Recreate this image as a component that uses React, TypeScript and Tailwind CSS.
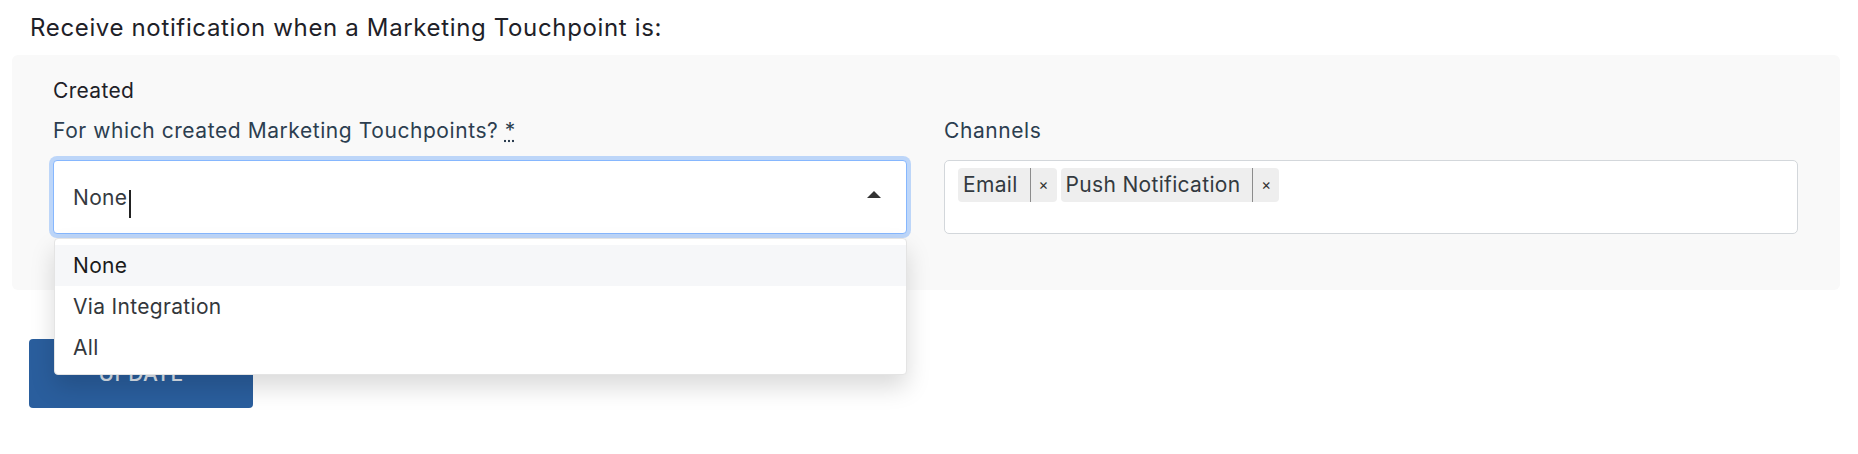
import React from "react";

const OPTIONS = ["None", "Via Integration", "All"];
const CHANNELS = ["Email", "Push Notification"];

function ChannelTag({ label }: { label: string }) {
  return (
    <span className="flex h-[34px] items-stretch rounded-[4px] bg-[#eeeeee] text-[21px] text-[#333a40]">
      <span className="flex items-center border-r border-[#8c8c8c] pl-[5px] pr-[12px]">
        {label}
      </span>
      <button
        type="button"
        className="flex w-[26px] items-center justify-center text-[15px] text-[#333]"
      >
        ×
      </button>
    </span>
  );
}

export default function App() {
  return (
    <div className="min-h-[454px] w-full overflow-hidden bg-white font-['Inter','Open_Sans',sans-serif] tracking-[0.02em] text-[#212529]">
      <div className="pl-[12px] pr-[18px] pt-[10px]">
        <p className="pl-[18px] text-[24px] leading-[36px] tracking-[0.027em] text-[#1e2128]">
          Receive notification when a Marketing Touchpoint is:
        </p>

        {/* Created event settings */}
        <section className="mt-[9px] rounded-[6px] bg-[#f9f9f9] pb-[56px] pl-[41px] pr-[42px] pt-[21px]">
          <p className="text-[21px] leading-[30px] text-[#1e2128]">Created</p>

          <div className="mt-[10px] grid grid-cols-2 gap-x-[37px]">
            <div>
              <label className="block text-[21px] leading-[30px] tracking-[0.027em] text-[#2c3e50]">
                For which created Marketing Touchpoints?{" "}
                <abbr title="required" className="cursor-help underline decoration-dotted">
                  *
                </abbr>
              </label>

              <div className="relative mt-[14px]">
                <div className="flex h-[74px] items-center justify-between rounded-[4px] border border-[#86b7fe] bg-white pl-[19px] pr-[25px] shadow-[0_0_0_4px_rgba(13,110,253,0.25)]">
                  <span className="flex items-center pt-[2px] text-[21px] text-[#363a3f]">
                    None
                    <span className="ml-[2px] mt-[12px] h-[28px] w-[2px] bg-[#222]" />
                  </span>
                  <svg width="14" height="7" viewBox="0 0 14 7" className="mb-[5px]">
                    <path d="M0 7L7 0L14 7Z" fill="#333" />
                  </svg>
                </div>

                {/* open menu */}
                <ul className="absolute left-px right-0 top-[78px] z-10 rounded-[4px] border border-[#e4e4e4] bg-white py-[6px] shadow-[0_12px_24px_rgba(0,0,0,0.15)]">
                  {OPTIONS.map((option, index) => (
                    <li
                      key={option}
                      className={
                        index === 0
                          ? "flex h-[41px] items-center bg-[#f6f7f9] pl-[18px] pt-[1px] text-[21px] text-[#1b1b1b]"
                          : "flex h-[41px] items-center pl-[18px] pt-[1px] text-[21px] text-[#33373c]"
                      }
                    >
                      {option}
                    </li>
                  ))}
                </ul>
              </div>
            </div>

            <div>
              <label className="block text-[21px] leading-[30px] tracking-[0.027em] text-[#2c3e50]">
                Channels
              </label>
              <div className="mt-[14px] flex h-[74px] items-start gap-[4px] rounded-[5px] border border-[#d3d7db] bg-white pl-[13px] pt-[7px]">
                {CHANNELS.map((channel) => (
                  <ChannelTag key={channel} label={channel} />
                ))}
              </div>
            </div>
          </div>
        </section>

        <button
          type="button"
          className="ml-[17px] mt-[49px] h-[69px] w-[224px] rounded-[4px] bg-[#2a5e9d] text-[21px] font-medium uppercase text-[#dde5ee]"
        >
          Update
        </button>
      </div>
    </div>
  );
}
